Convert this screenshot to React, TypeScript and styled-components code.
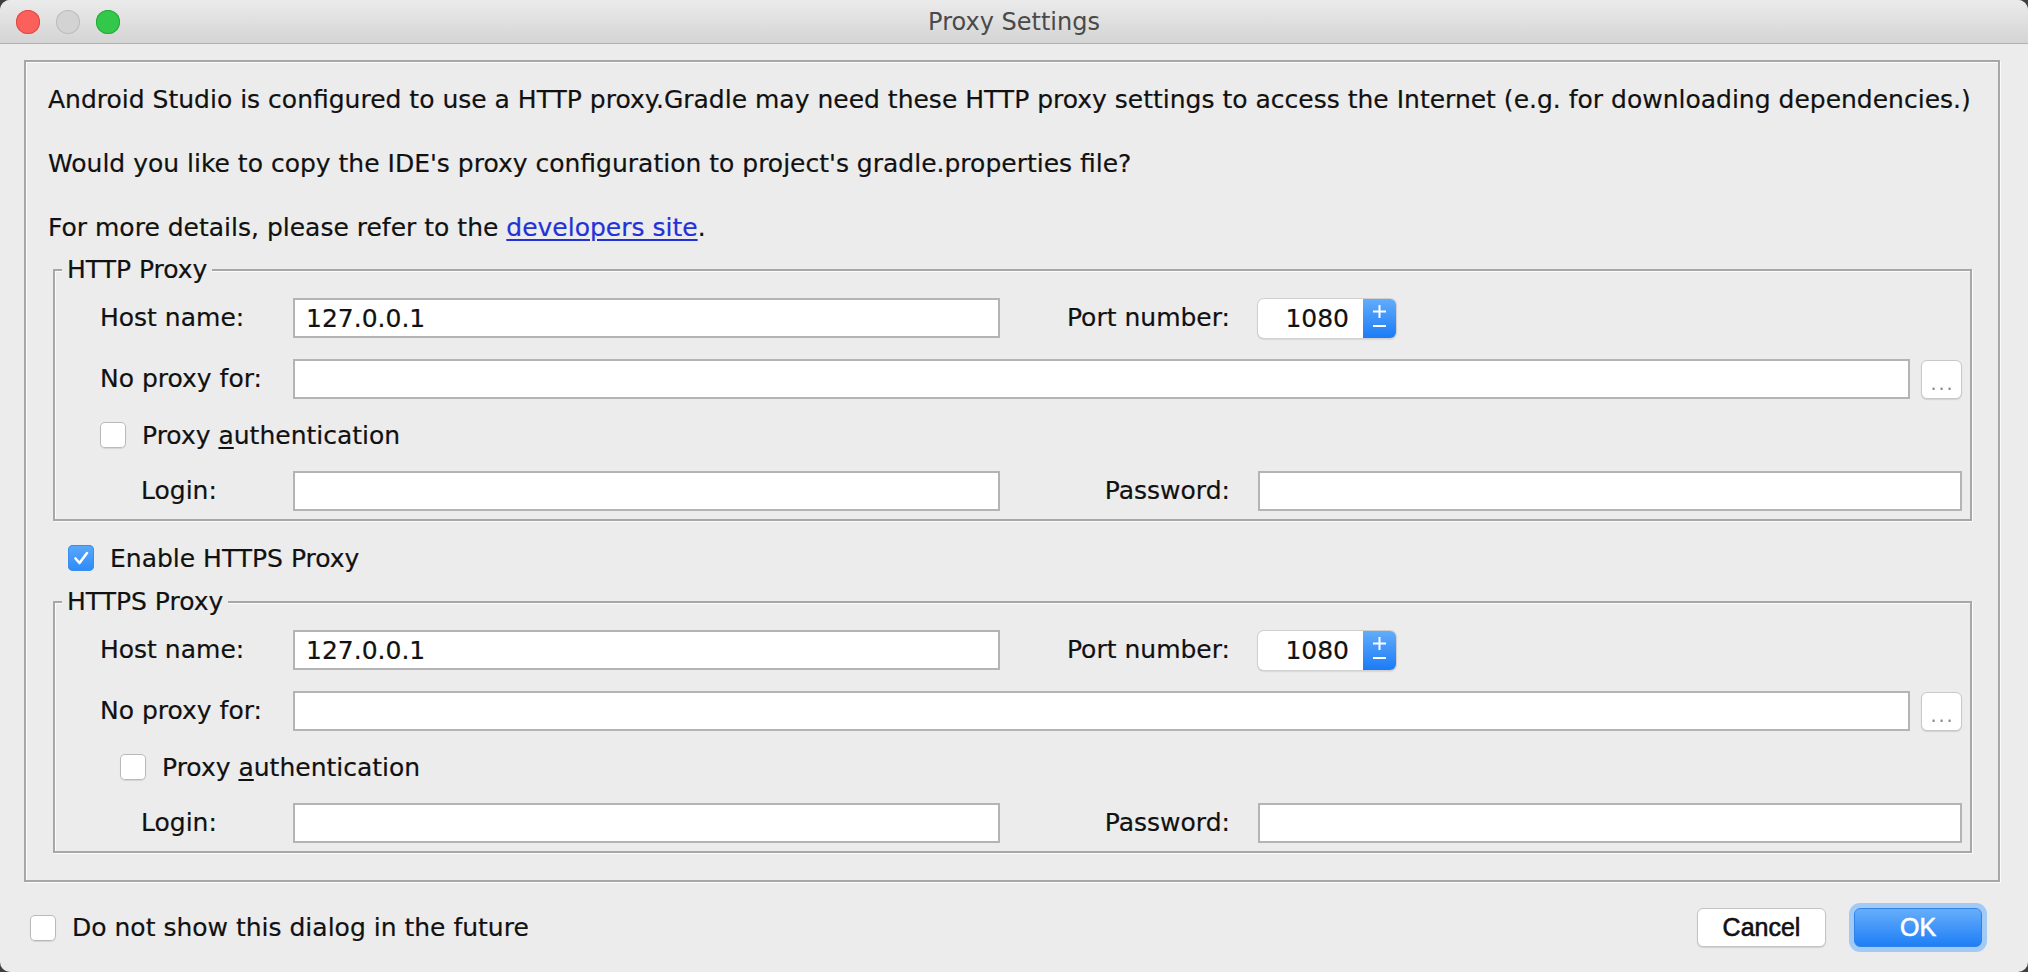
import React from 'react';
import styled, { createGlobalStyle, css } from 'styled-components';

const GlobalStyle = createGlobalStyle`
  html, body {
    margin: 0;
    padding: 0;
    background: #3f3f3f;
  }
  * {
    box-sizing: border-box;
  }
`;

const Window = styled.div`
  width: 2028px;
  height: 972px;
  display: flex;
  flex-direction: column;
  background: #ececec;
  border-radius: 10px;
  overflow: hidden;
  font-family: 'DejaVu Sans', 'Liberation Sans', sans-serif;
  font-size: 25px;
  color: #111;
  -webkit-text-stroke: 0.2px currentColor;
`;

const TitleBar = styled.div`
  flex: none;
  height: 44px;
  display: grid;
  grid-template-columns: 1fr auto 1fr;
  align-items: center;
  background: linear-gradient(#ebebeb, #d4d4d4);
  border-bottom: 1px solid #b1b1b1;
`;

const Lights = styled.div`
  display: flex;
  gap: 16px;
  padding-left: 16px;
`;

const Light = styled.span<{ $fill: string; $edge: string }>`
  width: 24px;
  height: 24px;
  border-radius: 50%;
  background: ${(p) => p.$fill};
  box-shadow: inset 0 0 0 1px ${(p) => p.$edge};
`;

const Title = styled.div`
  color: #4a4a4a;
  font-size: 24px;
  line-height: 30px;
  -webkit-text-stroke: 0;
`;

const Body = styled.div`
  flex: 1;
  display: flex;
  flex-direction: column;
  padding: 16px 28px 0 24px;
`;

const etched = css`
  border: 2px solid #a7a7a7;
  box-shadow: inset 1px 1px 0 #fbfbfb, 1px 1px 0 #fbfbfb;
`;

const Panel = styled.div`
  ${etched};
  padding: 23px 26px 27px 22px;
`;

const Message = styled.p<{ $last?: boolean }>`
  margin: 0 0 ${(p) => (p.$last ? 12 : 34)}px;
  line-height: 30px;
  white-space: nowrap;
`;

const Link = styled.a`
  color: #2332d6;
  text-decoration: underline;
  text-underline-offset: 3px;
`;

const Group = styled.fieldset`
  ${etched};
  margin: 0 0 0 5px;
  padding: 0;
  min-width: 0;
`;

const Legend = styled.legend`
  margin-left: 7px;
  padding: 0 5px;
  line-height: 30px;
  background: #ececec;
`;

const FormGrid = styled.div`
  display: grid;
  grid-template-columns: 193px 707px 258px 1fr;
  grid-template-rows: 40px 40px 30px 40px;
  row-gap: 21px;
  align-items: center;
  padding: 13px 8px 8px 45px;
`;

const FieldLabel = styled.label<{ $indent?: number }>`
  padding-left: ${(p) => p.$indent || 0}px;
  line-height: 30px;
  white-space: nowrap;
`;

const SideLabel = styled.label`
  justify-self: end;
  padding-right: 28px;
  line-height: 30px;
  white-space: nowrap;
`;

const TextField = styled.input`
  width: 100%;
  height: 40px;
  padding: 0 11px;
  border: 2px solid #b4b4b4;
  border-radius: 0;
  background: #fff;
  font: inherit;
  color: #111;
  outline: none;
`;

const NoProxyCell = styled.div`
  grid-column: 2 / 5;
  display: flex;
  align-items: center;
  gap: 11px;
`;

const DotsButton = styled.button`
  flex: none;
  width: 41px;
  height: 39px;
  display: flex;
  align-items: flex-end;
  justify-content: center;
  padding: 0 0 5px 2px;
  background: #fff;
  border: 1px solid #c8c8c8;
  border-radius: 6px;
  box-shadow: 0 1px 1px rgba(0, 0, 0, 0.12);
  font-family: 'DejaVu Sans', sans-serif;
  font-size: 19px;
  line-height: 19px;
  letter-spacing: 2px;
  color: #8a8a8a;
  -webkit-text-stroke: 0;
`;

const Spinner = styled.div`
  justify-self: start;
  width: 138px;
  height: 39px;
  display: flex;
  border-radius: 6px;
  overflow: hidden;
  box-shadow: 0 0 0 1px #d0d0d0, 0 1px 2px rgba(0, 0, 0, 0.28);
`;

const SpinnerValue = styled.div`
  flex: 1;
  display: flex;
  align-items: center;
  justify-content: flex-end;
  padding-right: 14px;
  background: #fff;
`;

const SpinnerArrows = styled.div`
  width: 33px;
  background: linear-gradient(#62acfb, #1b7bf6);
`;

const CheckRow = styled.div<{ $indent?: number; $span?: boolean }>`
  display: flex;
  align-items: center;
  gap: 16px;
  height: 30px;
  padding-left: ${(p) => p.$indent || 0}px;
  white-space: nowrap;
  ${(p) =>
    p.$span &&
    css`
      grid-column: 1 / -1;
    `}
`;

const EnableRow = styled(CheckRow)`
  margin: 22px 0 14px 20px;
`;

const Box = styled.span<{ $checked?: boolean }>`
  flex: none;
  width: 26px;
  height: 26px;
  border-radius: 5px;
  display: flex;
  align-items: center;
  justify-content: center;
  ${(p) =>
    p.$checked
      ? css`
          background: linear-gradient(#5aa9fc, #2d8af7);
          box-shadow: inset 0 0 0 1px #3a8ef0;
        `
      : css`
          background: #fff;
          box-shadow: inset 0 0 0 1px #b9b9b9, 0 1px 1px rgba(0, 0, 0, 0.1);
        `}
`;

const Footer = styled.div`
  display: flex;
  align-items: center;
  justify-content: space-between;
  padding: 26px 18px 0 6px;
`;

const Buttons = styled.div`
  display: flex;
  gap: 28px;
`;

const PushButton = styled.button<{ $primary?: boolean }>`
  height: 39px;
  border-radius: 6px;
  font-family: 'Liberation Sans', Arial, sans-serif;
  font-size: 25px;
  padding: 0;
  -webkit-text-stroke: 0.6px currentColor;
  ${(p) =>
    p.$primary
      ? css`
          width: 128px;
          color: #fff;
          background: linear-gradient(#66aefb, #1e7ff6);
          border: 1px solid #2f82e6;
          box-shadow: 0 0 0 5px #a3c9f5;
        `
      : css`
          width: 129px;
          color: #111;
          background: #fff;
          border: 1px solid #c4c4c4;
          box-shadow: 0 1px 1px rgba(0, 0, 0, 0.12);
        `}
`;

const Mnemonic = styled.span`
  text-decoration: underline;
  text-underline-offset: 3px;
`;

const Checkbox = ({ checked }: { checked?: boolean }) => (
  <Box $checked={checked}>
    {checked && (
      <svg width="26" height="26" viewBox="0 0 26 26">
        <path
          d="M7.5 13.5l4 4.5 7.5-10"
          fill="none"
          stroke="#fff"
          strokeWidth="2.6"
          strokeLinecap="round"
          strokeLinejoin="round"
        />
      </svg>
    )}
  </Box>
);

const PortSpinner = ({ value }: { value: string }) => (
  <Spinner>
    <SpinnerValue>{value}</SpinnerValue>
    <SpinnerArrows>
      <svg width="33" height="39" viewBox="0 0 33 39">
        <path
          d="M16.5 6v13M10 12.5h13M10 27h13"
          stroke="#fff"
          strokeWidth="2"
          fill="none"
        />
      </svg>
    </SpinnerArrows>
  </Spinner>
);

const ProxyGroup = ({ title, authIndent }: { title: string; authIndent: number }) => (
  <Group>
    <Legend>{title}</Legend>
    <FormGrid>
      <FieldLabel>Host name:</FieldLabel>
      <TextField defaultValue="127.0.0.1" />
      <SideLabel>Port number:</SideLabel>
      <PortSpinner value="1080" />

      <FieldLabel>No proxy for:</FieldLabel>
      <NoProxyCell>
        <TextField />
        <DotsButton>...</DotsButton>
      </NoProxyCell>

      <CheckRow $span $indent={authIndent}>
        <Checkbox />
        <span>
          Proxy <Mnemonic>a</Mnemonic>uthentication
        </span>
      </CheckRow>

      <FieldLabel $indent={41}>Login:</FieldLabel>
      <TextField />
      <SideLabel>Password:</SideLabel>
      <TextField type="password" />
    </FormGrid>
  </Group>
);

const App = () => (
  <>
    <GlobalStyle />
    <Window>
      <TitleBar>
        <Lights>
          <Light $fill="#fc605b" $edge="#de4a44" />
          <Light $fill="#d3d3d3" $edge="#bcbcbc" />
          <Light $fill="#34c84a" $edge="#24a938" />
        </Lights>
        <Title>Proxy Settings</Title>
        <div />
      </TitleBar>
      <Body>
        <Panel>
          <Message>
            Android Studio is configured to use a HTTP proxy.Gradle may need these HTTP proxy
            settings to access the Internet (e.g. for downloading dependencies.)
          </Message>
          <Message>
            Would you like to copy the IDE's proxy configuration to project's gradle.properties
            file?
          </Message>
          <Message $last>
            For more details, please refer to the <Link href="#">developers site</Link>.
          </Message>

          <ProxyGroup title="HTTP Proxy" authIndent={0} />

          <EnableRow>
            <Checkbox checked />
            <span>Enable HTTPS Proxy</span>
          </EnableRow>

          <ProxyGroup title="HTTPS Proxy" authIndent={20} />
        </Panel>
        <Footer>
          <CheckRow>
            <Checkbox />
            <span>Do not show this dialog in the future</span>
          </CheckRow>
          <Buttons>
            <PushButton>Cancel</PushButton>
            <PushButton $primary>OK</PushButton>
          </Buttons>
        </Footer>
      </Body>
    </Window>
  </>
);

export default App;
